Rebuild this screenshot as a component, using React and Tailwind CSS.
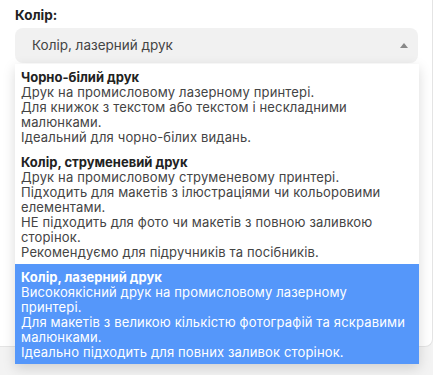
import React from "react";

const options = [
  {
    title: "Чорно-білий друк",
    lines: [
      "Друк на промисловому лазерному принтері.",
      "Для книжок з текстом або текстом і нескладними",
      "малюнками.",
      "Ідеальний для чорно-білих видань.",
    ],
  },
  {
    title: "Колір, струменевий друк",
    lines: [
      "Друк на промисловому струменевому принтері.",
      "Підходить для макетів з ілюстраціями чи кольоровими",
      "елементами.",
      "НЕ підходить для фото чи макетів з повною заливкою",
      "сторінок.",
      "Рекомендуємо для підручників та посібників.",
    ],
  },
  {
    title: "Колір, лазерний друк",
    lines: [
      "Високоякісний друк на промисловому лазерному",
      "принтері.",
      "Для макетів з великою кількістю фотографій та яскравими",
      "малюнками.",
      "Ідеально підходить для повних заливок сторінок.",
    ],
  },
];

const App = () => {
  const selected = 2;

  return (
    <div
      className="w-[433px] h-[375px] bg-[#f3f3f3] overflow-hidden relative"
      style={{ fontFamily: 'Inter, "Open Sans", sans-serif' }}
    >
      {/* ================= CARD ================= */}
      <div className="h-[347px] bg-white border-r border-b border-[#e4e4e4] rounded-br-lg pl-[15px] pr-[15px] pt-[6px]">
        <div className="text-[13.5px] leading-[18px] font-bold text-[#222] mb-[4px]">
          Колір:
        </div>

        <div className="relative">
          <div className="h-[35px] w-[403px] rounded-lg bg-[#f1f1f1] flex items-center justify-between pl-[17px] pr-[10px]">
            <span className="text-[13.5px] text-[#444]">Колір, лазерний друк</span>
            <span className="w-0 h-0 border-l-[4px] border-r-[4px] border-b-[5px] border-l-transparent border-r-transparent border-b-[#888]" />
          </div>

          {/* ================= DROPDOWN ================= */}
          <div className="absolute left-0 top-[36px] w-[404px] bg-white shadow-[0_4px_12px_rgba(0,0,0,0.15)] z-10">
            {options.map((opt, i) => (
              <div
                key={opt.title}
                className={`px-[6px] pt-[6px] pb-[4px] text-[13px] leading-[15px] tracking-[0.15px] whitespace-nowrap ${
                  i === selected ? "bg-[#5597fa] text-white" : "text-[#444]"
                }`}
              >
                <div
                  className={`font-bold tracking-normal ${
                    i === selected ? "text-white" : "text-[#222]"
                  }`}
                >
                  {opt.title}
                </div>
                {opt.lines.map((line) => (
                  <div key={line}>{line}</div>
                ))}
              </div>
            ))}
          </div>
        </div>
      </div>
    </div>
  );
};

export default App;
